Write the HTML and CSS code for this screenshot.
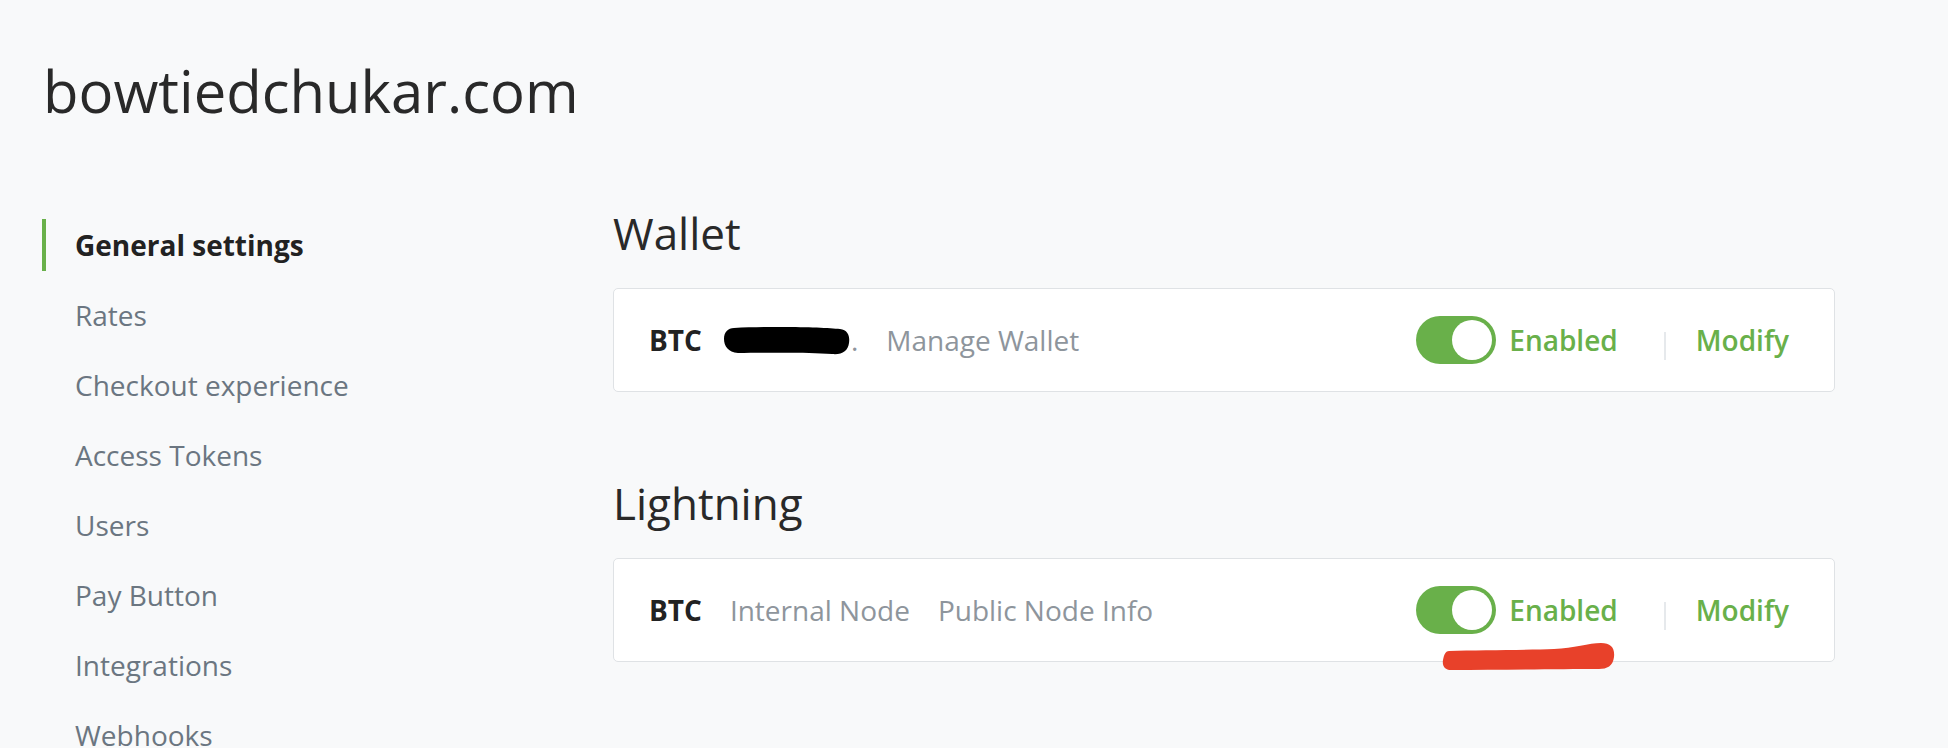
FILE: index.html
```html
<!DOCTYPE html>
<html lang="en">
<head>
<meta charset="utf-8">
<title>bowtiedchukar.com - Store settings</title>
<link rel="stylesheet" href="styles.css">
</head>
<body>
<div class="page">
  <header class="store-header">
    <h1 class="store-title">bowtiedchukar.com</h1>
  </header>
  <div class="layout">
    <nav class="sidenav">
      <a class="nav-item active" href="#">General settings</a>
      <a class="nav-item" href="#">Rates</a>
      <a class="nav-item" href="#">Checkout experience</a>
      <a class="nav-item" href="#">Access Tokens</a>
      <a class="nav-item" href="#">Users</a>
      <a class="nav-item" href="#">Pay Button</a>
      <a class="nav-item" href="#">Integrations</a>
      <a class="nav-item" href="#">Webhooks</a>
    </nav>
    <main class="content">
      <section class="section">
        <h2 class="section-title">Wallet</h2>
        <div class="card">
          <span class="asset">BTC</span>
          <span class="item redacted"><svg class="blob" width="126" height="30" viewBox="0 0 126 30" aria-hidden="true"><path d="M10 2 C50 0 100 1 116 3 C124 4 126 10 125 17 C124 25 118 29 108 28 C80 26 40 27 14 27 C4 26 0 20 0 13 C0 6 4 2 10 2 Z" fill="#000"/></svg>.</span>
          <a class="item" href="#">Manage Wallet</a>
          <div class="actions">
            <span class="toggle"><span class="knob"></span></span>
            <span class="status">Enabled</span>
            <span class="sep"></span>
            <a class="modify" href="#">Modify</a>
          </div>
        </div>
      </section>
      <section class="section">
        <h2 class="section-title">Lightning</h2>
        <div class="card">
          <span class="asset">BTC</span>
          <span class="item">Internal Node</span>
          <a class="item" href="#">Public Node Info</a>
          <div class="actions">
            <span class="toggle"><span class="knob"></span></span>
            <span class="status">Enabled</span>
            <span class="sep"></span>
            <a class="modify" href="#">Modify</a>
          </div>
          <svg class="scribble" width="180" height="36" viewBox="0 0 180 36" aria-hidden="true"><path d="M10 13 C40 12 90 12 115 11 C135 10 150 5 162 5 C172 5 176 10 175 19 C174 28 168 31 160 31 C120 31 60 32 12 32 C6 32 3 28 4 22 C5 16 7 13 10 13 Z" fill="#e8412a"/></svg>
        </div>
      </section>
    </main>
  </div>
</div>
</body>
</html>
```

FILE: styles.css
```css
* { box-sizing: border-box; }

html, body {
  margin: 0;
  padding: 0;
  background: #f8f9fa;
}

body {
  font-family: "Open Sans", "Noto Sans", "Liberation Sans", sans-serif;
  color: #292b2c;
  overflow: hidden;
}

a { text-decoration: none; }

.page {
  padding-left: 40px;
}

.store-header {
  padding-top: 56px;
  padding-left: 3px;
}

.store-title {
  margin: 0;
  font-size: 58px;
  line-height: 70px;
  font-weight: 400;
  color: #292929;
}

.layout {
  margin-top: 74px;
  display: grid;
  grid-template-columns: 573px 1222px;
}

.sidenav {
  display: flex;
  flex-direction: column;
  padding-top: 19px;
  padding-left: 2px;
}

.nav-item {
  display: block;
  height: 52px;
  padding: 0 0 0 29px;
  margin-bottom: 18px;
  border-left: 4px solid transparent;
  font-size: 28px;
  line-height: 52px;
  color: #6b7681;
  white-space: nowrap;
}

.nav-item.active {
  border-left-color: #69b04a;
  color: #222;
  font-weight: 700;
}

.section-title {
  margin: 8px 0 30px;
  font-size: 44px;
  line-height: 50px;
  font-weight: 500;
  color: #292929;
}

.section + .section .section-title {
  margin-top: 86px;
}

.card {
  position: relative;
  display: flex;
  align-items: center;
  height: 104px;
  padding: 0 45px 0 35px;
  background: #fff;
  border: 1px solid #dfe2e5;
  border-radius: 5px;
  font-size: 28px;
  line-height: 38px;
}

.asset {
  font-weight: 700;
  color: #222;
}

.item {
  margin-left: 28px;
  color: #8e959c;
}

.redacted {
  display: inline-flex;
  align-items: center;
}

.redacted + .item {
  margin-left: 28px;
}

.blob {
  margin-left: -6px;
  margin-right: 1px;
  margin-top: 2px;
}

.actions {
  margin-left: auto;
  display: flex;
  align-items: center;
}

.toggle {
  display: flex;
  justify-content: flex-end;
  align-items: center;
  width: 80px;
  height: 48px;
  padding: 4px;
  border-radius: 24px;
  background: #69b04a;
}

.knob {
  width: 40px;
  height: 40px;
  border-radius: 50%;
  background: #fff;
}

.status {
  margin-left: 13px;
  color: #69b04a;
  font-weight: 600;
}

.sep {
  width: 2px;
  height: 28px;
  margin: 12px 30px 0 46px;
  background: #e6e9ec;
}

.modify {
  color: #69b04a;
  font-weight: 600;
}

.scribble {
  position: absolute;
  left: 825px;
  top: 79px;
}
```
